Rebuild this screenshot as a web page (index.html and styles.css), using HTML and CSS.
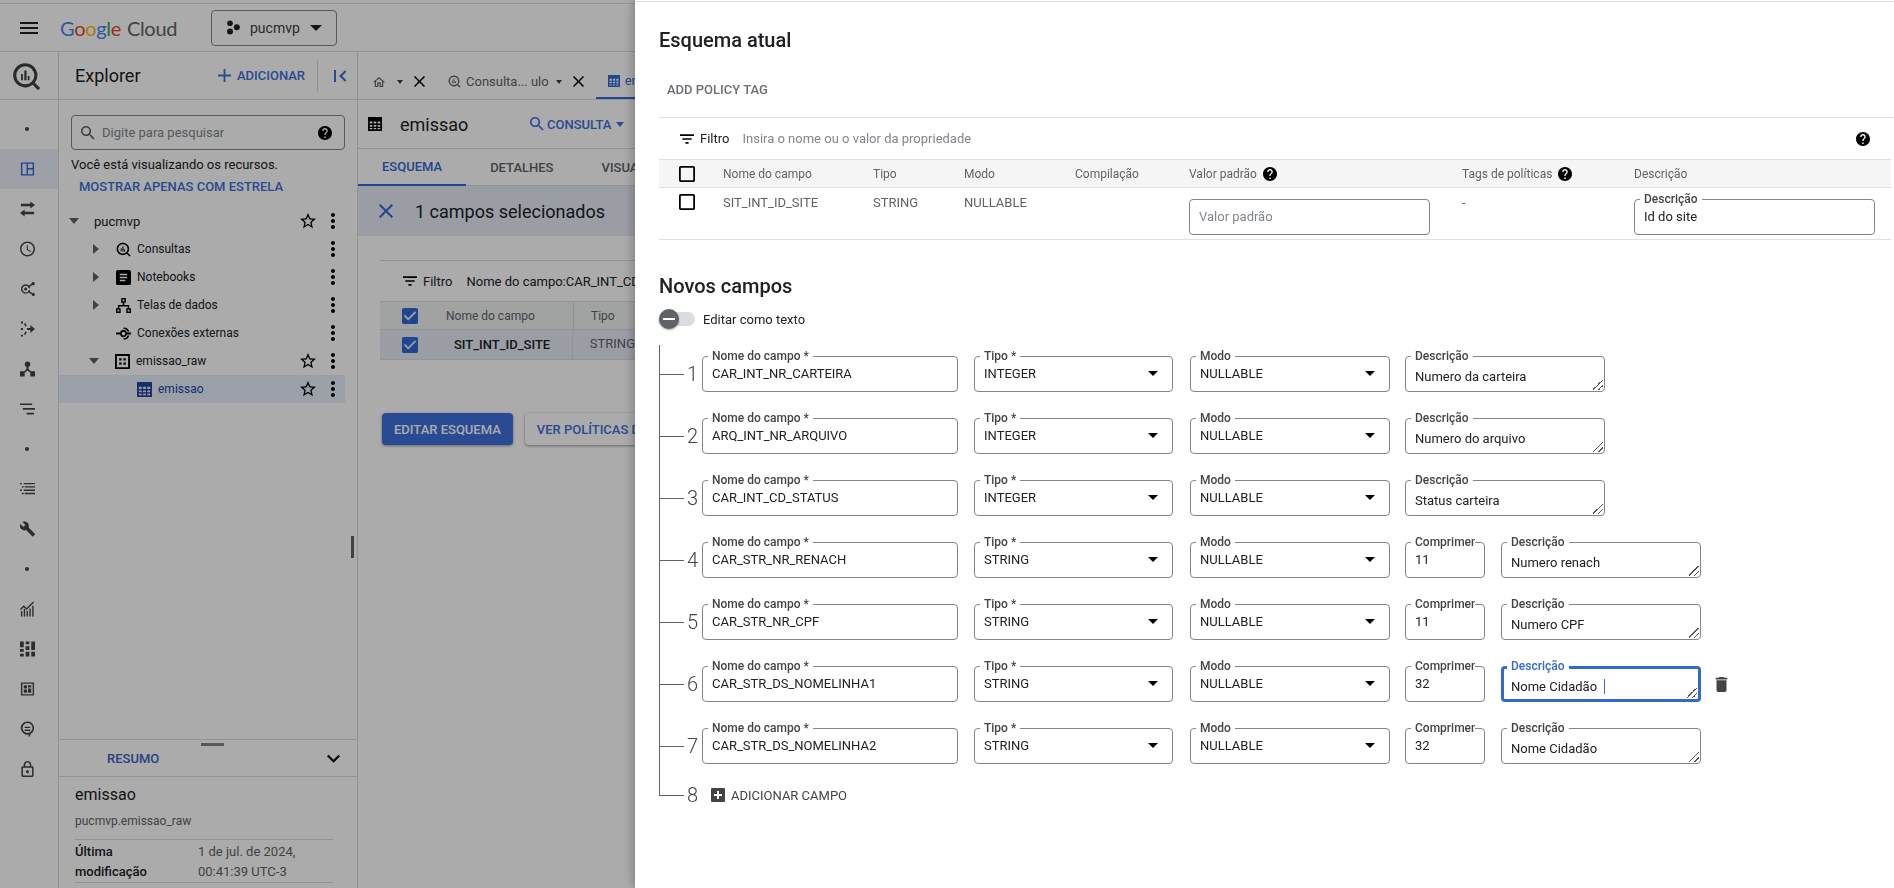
FILE: index.html
```html
<!DOCTYPE html>
<html lang="pt">
<head>
    <meta charset="UTF-8">
    <title>BigQuery - pucmvp</title>
    <link rel="stylesheet" href="styles.css">
</head>
<body>
    <!-- icon sprite -->
    <svg class="sprite" xmlns="http://www.w3.org/2000/svg">
        <symbol id="i-menu" viewBox="0 0 24 24"><path d="M3 18h18v-2H3v2zm0-5h18v-2H3v2zm0-7v2h18V6H3z"/></symbol>
        <symbol id="i-help" viewBox="2 2 20 20"><path d="M12 2C6.48 2 2 6.48 2 12s4.48 10 10 10 10-4.48 10-10S17.52 2 12 2zm1 17h-2v-2h2v2zm2.07-7.75l-.9.92C13.45 12.9 13 13.5 13 15h-2v-.5c0-1.1.45-2.1 1.17-2.83l1.24-1.26c.37-.36.59-.86.59-1.41 0-1.1-.9-2-2-2s-2 .9-2 2H8c0-2.21 1.79-4 4-4s4 1.79 4 4c0 .88-.36 1.68-.93 2.25z"/></symbol>
        <symbol id="i-search" viewBox="3 3 18 18"><path d="M15.5 14h-.79l-.28-.27C15.41 12.59 16 11.11 16 9.5 16 5.91 13.09 3 9.5 3S3 5.91 3 9.5 5.91 16 9.5 16c1.61 0 3.09-.59 4.23-1.57l.27.28v.79l5 4.99L20.49 19l-4.99-5zm-6 0C7.01 14 5 11.99 5 9.5S7.01 5 9.5 5 14 7.01 14 9.5 11.99 14 9.5 14z"/></symbol>
        <symbol id="i-star" viewBox="2 2 20 20"><path d="M22 9.24l-7.19-.62L12 2 9.19 8.63 2 9.24l5.46 4.73L5.82 21 12 17.27 18.18 21l-1.63-7.03L22 9.24zM12 15.4l-3.76 2.27 1-4.28-3.32-2.88 4.38-.38L12 6.1l1.71 4.04 4.38.38-3.32 2.88 1 4.28L12 15.4z"/></symbol>
        <symbol id="i-more" viewBox="0 0 24 24"><path d="M12 8c1.1 0 2-.9 2-2s-.9-2-2-2-2 .9-2 2 .9 2 2 2zm0 2c-1.1 0-2 .9-2 2s.9 2 2 2 2-.9 2-2-.9-2-2-2zm0 6c-1.1 0-2 .9-2 2s.9 2 2 2 2-.9 2-2-.9-2-2-2z"/></symbol>
        <symbol id="i-close" viewBox="5 5 14 14"><path d="M19 6.41L17.59 5 12 10.59 6.41 5 5 6.41 10.59 12 5 17.59 6.41 19 12 13.41 17.59 19 19 17.59 13.41 12z"/></symbol>
        <symbol id="i-add" viewBox="5 5 14 14"><path d="M19 13h-6v6h-2v-6H5v-2h6V5h2v6h6v2z"/></symbol>
        <symbol id="i-filter" viewBox="3 6 18 12"><path d="M10 18h4v-2h-4v2zM3 6v2h18V6H3zm3 7h12v-2H6v2z"/></symbol>
        <symbol id="i-box" viewBox="3 3 18 18"><path d="M19 5v14H5V5h14m0-2H5c-1.1 0-2 .9-2 2v14c0 1.1.9 2 2 2h14c1.1 0 2-.9 2-2V5c0-1.1-.9-2-2-2z"/></symbol>
        <symbol id="i-checked" viewBox="3 3 18 18"><path d="M19 3H5c-1.11 0-2 .9-2 2v14c0 1.1.89 2 2 2h14c1.11 0 2-.9 2-2V5c0-1.1-.89-2-2-2zm-9 14l-5-5 1.41-1.41L10 14.17l7.59-7.59L19 8l-9 9z"/></symbol>
        <symbol id="i-delete" viewBox="5 3 14 18"><path d="M6 19c0 1.1.9 2 2 2h8c1.1 0 2-.9 2-2V7H6v12zM19 4h-3.5l-1-1h-5l-1 1H5v2h14V4z"/></symbol>
        <symbol id="i-chevron" viewBox="6 8 12 8"><path d="M16.59 8.59L12 13.17 7.41 8.59 6 10l6 6 6-6z"/></symbol>
        <symbol id="i-home" viewBox="2 3 20 17"><path d="M12 5.69l5 4.5V18h-2v-6H9v6H7v-7.81l5-4.5M12 3L2 12h3v8h6v-6h2v6h6v-8h3L12 3z"/></symbol>
        <symbol id="i-clock" viewBox="2 2 20 20"><path d="M11.99 2C6.47 2 2 6.48 2 12s4.47 10 9.99 10C17.52 22 22 17.52 22 12S17.52 2 11.99 2zM12 20c-4.42 0-8-3.58-8-8s3.58-8 8-8 8 3.58 8 8-3.58 8-8 8zm.5-13H11v6l5.25 3.15.75-1.23-4.5-2.67z"/></symbol>
        <symbol id="i-swap" viewBox="0 0 16 16"><path d="M1 2.500h10V0l5 3.700-5 3.700V5H1zM15 11H5V8.600L0 12.300 5 16v-2.500h10z"/></symbol>
        <symbol id="i-wrench" viewBox="1 1 22 22"><path d="M22.7 19l-9.1-9.1c.9-2.3.4-5-1.5-6.9-2-2-5-2.4-7.4-1.3L9 6 6 9 1.6 4.700C.4 7.100.9 10.100 2.900 12.100c1.900 1.900 4.600 2.400 6.900 1.500l9.100 9.100c.4.400 1 .4 1.400 0l2.300-2.300c.5-.4.5-1.100.1-1.400z"/></symbol>
        <symbol id="i-lock" viewBox="4 1 16 21"><path d="M18 8h-1V6c0-2.76-2.24-5-5-5S7 3.24 7 6v2H6c-1.1 0-2 .9-2 2v10c0 1.1.9 2 2 2h12c1.1 0 2-.9 2-2V10c0-1.1-.9-2-2-2zM9 6c0-1.66 1.34-3 3-3s3 1.34 3 3v2H9V6zm9 14H6V10h12v10zm-6-3c1.1 0 2-.9 2-2s-.9-2-2-2-2 .9-2 2 .9 2 2 2z"/></symbol>
        <symbol id="i-table" viewBox="0 0 16 16"><path fill-rule="evenodd" d="M0 0h16v16H0zM2 5v2.500h3V5zm4.500 0v2.500h3V5zM11 5v2.500h3V5zM2 9v2h3V9zm4.500 0v2h3V9zM11 9v2h3V9zM2 12.500V14h3v-1.500zm4.500 0V14h3v-1.500zm4.500 0V14h3v-1.500z"/></symbol>
        <symbol id="i-dataset" viewBox="0 0 16 16"><path fill-rule="evenodd" d="M0 0h16v16H0zM2 2v12h12V2zM4.500 4.500h2.500V7H4.500zm4.500 0h2.500V7H9zM4.500 9h2.500v2.500H4.500zM9 9h2.500v2.500H9z"/></symbol>
        <symbol id="i-note" viewBox="0 0 16 16"><path fill-rule="evenodd" d="M2 0h12a2 2 0 0 1 2 2v12a2 2 0 0 1-2 2H2a2 2 0 0 1-2-2V2a2 2 0 0 1 2-2zM4 4v1.500h8V4zm0 3.200v1.500h8V7.200zm0 3.200v1.500h6v-1.500z"/></symbol>
        <symbol id="i-nodes" viewBox="0 0 16 16"><path fill-rule="evenodd" d="M5.500 0h5v5H8.800v2.500H14V11h2v5h-5v-5h1.500V9H3.500v2H5v5H0v-5h2V7.500h5.200V5H5.500zM7 1.500v2h2v-2zM1.500 12.500v2h2v-2zm11 0v2h2v-2z"/></symbol>
        <symbol id="i-link" viewBox="0 0 16 16"><path fill-rule="evenodd" d="M0 7h4.500a3.500 3.500 0 0 1 6.900 0H16v2h-4.600a3.500 3.500 0 0 1-6.900 0H0zM8 6a2 2 0 1 0 0 4 2 2 0 0 0 0-4zM8 1.500a6.500 6.500 0 0 1 6.300 4.500h-1.700A5 5 0 0 0 8 3zM8 14.500a6.500 6.500 0 0 0 6.300-4.500h-1.700A5 5 0 0 1 8 13z"/></symbol>
        <symbol id="i-query" viewBox="0 0 24 24"><path fill-rule="evenodd" d="M11 1a10 10 0 0 1 7.900 16.100l4.400 4.400-1.800 1.800-4.400-4.400A10 10 0 1 1 11 1zm0 2.500a7.500 7.500 0 1 0 0 15 7.500 7.500 0 0 0 0-15zM7.500 10H9v5H7.500zM10.200 7H12v8h-1.800zM13 11.500h1.500V15H13z"/></symbol>
        <symbol id="i-panel" viewBox="0 0 16 16"><path fill-rule="evenodd" d="M1 1h14v14H1zM2.500 2.500v11H7v-11zm6 0V7h5V2.500zm0 6v5h5v-5z"/></symbol>
        <symbol id="i-scan" viewBox="0 0 16 16"><path fill-rule="evenodd" d="M6 3a5 5 0 0 1 3.300 1.300L12.300 2.400a1.700 1.700 0 1 1 .9 1.400L10.300 5.600a5 5 0 0 1 .6 1.600H9.400A3.500 3.500 0 1 0 9.400 9h1.500a5 5 0 0 1-.6 1.500l3 1.900a1.700 1.700 0 1 1-.8 1.400L9.300 11.800A5 5 0 1 1 6 3zm0 3.500a1.600 1.600 0 1 1 0 3.200 1.600 1.600 0 0 1 0-3.200z"/></symbol>
        <symbol id="i-merge" viewBox="0 0 16 16"><path d="M1 0h2.200v2H1zm3.200 2.500l1.500-1 1.600 3-1.700.8zM1 7h2.200v2H1zm4.600 3.700l1.700.8-1.600 3-1.500-1zM1 14h2.200v2H1zM7.500 7H11V3.800L16 8l-5 4.200V9H7.500z"/></symbol>
        <symbol id="i-tree" viewBox="0 0 16 16"><path d="M8 0a3 3 0 0 1 1.100 5.800V8l2.400 2.500H16V16h-5v-3.900L8 9.500l-3 2.600V16H0v-5.500h4.500L6.900 8V5.800A3 3 0 0 1 8 0z"/></symbol>
        <symbol id="i-lines" viewBox="0 0 16 16"><path d="M0 2h13v1.800H0zM3 7h13v1.800H3zM7 12h8v1.800H7z"/></symbol>
        <symbol id="i-list" viewBox="0 0 16 16"><path d="M0 1.500h2V3H0zm4 0h12V3H4zM2 5h2v1.500H2zm3 0h11v1.500H5zM0 8.500h2V10H0zm4 0h12V10H4zM2 12h2v1.500H2zm3 0h11v1.500H5z"/></symbol>
        <symbol id="i-chart" viewBox="0 0 16 16"><path d="M1 10h1.500v6H1zm3-2h1.500v8H4zm3 2h1.500v6H7zm3-2.500h1.500V16H10zm3-3h1.500V16H13zM0 8l4-4 3 3 7-7 1 1-8 8-3-3-3 3z"/></symbol>
        <symbol id="i-dash" viewBox="0 0 16 16"><path d="M0 0h4v6H0zm6 0h4v3H6zm6 0h4v9h-4zM6 5h4v4H6zM0 8h4v3H0zm0 5h4v3H0zm6-2h4v5H6zm6 0h4v5h-4z"/></symbol>
        <symbol id="i-layout" viewBox="0 0 16 16"><path fill-rule="evenodd" d="M1 1h14v14H1zM2.500 2.500v11h11v-11zM4 4h3.500v3.500H4zm4.500 0H12v2.500H8.500zm0 3.500H12V12H8.500zM4 8.500h3.500V12H4z"/></symbol>
        <symbol id="i-chat" viewBox="0 0 16 16"><path fill-rule="evenodd" d="M8 0a7 7 0 0 1 3.500 13l-1 3H9l.5-2.200A7 7 0 1 1 8 0zm0 1.700a5.300 5.300 0 1 0 0 10.600 5.300 5.300 0 0 0 0-10.600zM5 5.500h6V7H5zm0 3h6V10H5z"/></symbol>
        <symbol id="i-project" viewBox="0 0 14 14"><circle cx="4" cy="2.800" r="2.800"/><circle cx="10.800" cy="6.800" r="3"/><circle cx="4" cy="11" r="3"/></symbol>
    </svg>

    <div class="app">
        <div class="top-strip"></div>
        <header class="topbar">
            <svg class="ico menu-ico"><use href="#i-menu"/></svg>
            <div class="logo"><span class="g-blue">G</span><span class="g-red">o</span><span class="g-yellow">o</span><span class="g-blue">g</span><span class="g-green">l</span><span class="g-red">e</span> <span class="g-cloud">Cloud</span></div>
            <div class="project-btn">
                <svg class="ico project-ico"><use href="#i-project"/></svg>
                <span>pucmvp</span>
                <i class="caret caret-big"></i>
            </div>
        </header>

        <div class="workspace">
            <!-- left icon rail -->
            <nav class="rail">
                <div class="rail-logo"><svg class="ico"><use href="#i-query"/></svg></div>
                <div class="rail-list">
                    <div class="rail-item"><i class="dot"></i></div>
                    <div class="rail-item active"><svg class="ico blue"><use href="#i-panel"/></svg></div>
                    <div class="rail-item"><svg class="ico"><use href="#i-swap"/></svg></div>
                    <div class="rail-item"><svg class="ico"><use href="#i-clock"/></svg></div>
                    <div class="rail-item"><svg class="ico"><use href="#i-scan"/></svg></div>
                    <div class="rail-item"><svg class="ico"><use href="#i-merge"/></svg></div>
                    <div class="rail-item"><svg class="ico"><use href="#i-tree"/></svg></div>
                    <div class="rail-item"><svg class="ico"><use href="#i-lines"/></svg></div>
                    <div class="rail-item"><i class="dot"></i></div>
                    <div class="rail-item"><svg class="ico"><use href="#i-list"/></svg></div>
                    <div class="rail-item"><svg class="ico"><use href="#i-wrench"/></svg></div>
                    <div class="rail-item"><i class="dot"></i></div>
                    <div class="rail-item"><svg class="ico"><use href="#i-chart"/></svg></div>
                    <div class="rail-item"><svg class="ico"><use href="#i-dash"/></svg></div>
                    <div class="rail-item"><svg class="ico"><use href="#i-layout"/></svg></div>
                    <div class="rail-item"><svg class="ico"><use href="#i-chat"/></svg></div>
                    <div class="rail-item"><svg class="ico"><use href="#i-lock"/></svg></div>
                </div>
            </nav>

            <!-- explorer -->
            <aside class="explorer">
                <div class="explorer-head">
                    <h2>Explorer</h2>
                    <span class="add-link"><svg class="ico"><use href="#i-add"/></svg>ADICIONAR</span>
                    <span class="collapse-btn"><b></b><i></i></span>
                </div>
                <div class="search-box">
                    <svg class="ico"><use href="#i-search"/></svg>
                    <span>Digite para pesquisar</span>
                    <svg class="ico help"><use href="#i-help"/></svg>
                </div>
                <p class="res-note">Você está visualizando os recursos.</p>
                <p class="star-link">MOSTRAR APENAS COM ESTRELA</p>
                <div class="res-tree">
                    <div class="res-row lvl0"><i class="caret tree-caret"></i><span>pucmvp</span><svg class="ico star"><use href="#i-star"/></svg><svg class="ico kebab"><use href="#i-more"/></svg></div>
                    <div class="res-row lvl1"><i class="caret-right"></i><svg class="ico res-ico"><use href="#i-query"/></svg><span>Consultas</span><svg class="ico kebab"><use href="#i-more"/></svg></div>
                    <div class="res-row lvl1"><i class="caret-right"></i><svg class="ico res-ico"><use href="#i-note"/></svg><span>Notebooks</span><svg class="ico kebab"><use href="#i-more"/></svg></div>
                    <div class="res-row lvl1"><i class="caret-right"></i><svg class="ico res-ico"><use href="#i-nodes"/></svg><span>Telas de dados</span><svg class="ico kebab"><use href="#i-more"/></svg></div>
                    <div class="res-row lvl1"><i class="caret-none"></i><svg class="ico res-ico"><use href="#i-link"/></svg><span>Conexões externas</span><svg class="ico kebab"><use href="#i-more"/></svg></div>
                    <div class="res-row lvl1"><i class="caret tree-caret"></i><svg class="ico res-ico"><use href="#i-dataset"/></svg><span>emissao_raw</span><svg class="ico star"><use href="#i-star"/></svg><svg class="ico kebab"><use href="#i-more"/></svg></div>
                    <div class="res-row lvl2 selected"><svg class="ico res-ico"><use href="#i-table"/></svg><span>emissao</span><svg class="ico star"><use href="#i-star"/></svg><svg class="ico kebab"><use href="#i-more"/></svg></div>
                </div>
                <div class="summary">
                    <i class="handle"></i>
                    <div class="summary-head"><span>RESUMO</span><svg class="ico"><use href="#i-chevron"/></svg></div>
                    <div class="summary-body">
                        <h3>emissao</h3>
                        <p class="summary-path">pucmvp.emissao_raw</p>
                        <div class="summary-row">
                            <div class="summary-key">Última<br>modificação</div>
                            <div class="summary-val">1 de jul. de 2024,<br>00:41:39 UTC-3</div>
                        </div>
                    </div>
                </div>
            </aside>

            <i class="splitter"></i>

            <!-- main content behind the panel -->
            <main class="main">
                <div class="main-tabs">
                    <svg class="ico tab-home"><use href="#i-home"/></svg><i class="caret"></i><svg class="ico tab-x"><use href="#i-close"/></svg>
                    <svg class="ico tab-query"><use href="#i-query"/></svg><span class="tab-text">Consulta... ulo</span><i class="caret"></i><svg class="ico tab-x"><use href="#i-close"/></svg>
                    <span class="tab-open"><svg class="ico"><use href="#i-table"/></svg>em</span>
                </div>
                <div class="title-row">
                    <svg class="ico title-ico"><use href="#i-table"/></svg>
                    <h1>emissao</h1>
                    <span class="query-btn"><svg class="ico"><use href="#i-search"/></svg>CONSULTA<i class="caret"></i></span>
                </div>
                <div class="sub-tabs">
                    <span class="sub-tab current">ESQUEMA</span>
                    <span class="sub-tab">DETALHES</span>
                    <span class="sub-tab">VISUA</span>
                </div>
                <div class="selected-bar">
                    <svg class="ico"><use href="#i-close"/></svg>
                    <span>1 campos selecionados</span>
                </div>
                <div class="schema-wrap">
                    <div class="main-filter">
                        <svg class="ico"><use href="#i-filter"/></svg><b>Filtro</b><span>Nome do campo:CAR_INT_CD</span>
                    </div>
                    <div class="main-row head">
                        <svg class="ico check"><use href="#i-checked"/></svg><span class="col-name">Nome do campo</span><span class="col-type">Tipo</span>
                    </div>
                    <div class="main-row picked">
                        <svg class="ico check"><use href="#i-checked"/></svg><strong class="col-name">SIT_INT_ID_SITE</strong><span class="col-type">STRING</span>
                    </div>
                    <div class="main-actions">
                        <span class="btn-primary">EDITAR ESQUEMA</span>
                        <span class="btn-plain">VER POLÍTICAS D</span>
                    </div>
                </div>
            </main>
        </div>
    </div>

    <div class="scrim"></div>

    <!-- side panel -->
    <section class="panel">
        <h2 class="panel-title">Esquema atual</h2>
        <div class="policy-bar"><span>ADD POLICY TAG</span></div>
        <div class="panel-filter">
            <svg class="ico"><use href="#i-filter"/></svg><b>Filtro</b>
            <span>Insira o nome ou o valor da propriedade</span>
            <svg class="ico help"><use href="#i-help"/></svg>
        </div>
        <div class="cur-grid cur-head">
            <span class="cur-check"><svg class="ico"><use href="#i-box"/></svg></span>
            <span>Nome do campo</span><span>Tipo</span><span>Modo</span><span>Compilação</span>
            <span class="with-help">Valor padrão <svg class="ico help"><use href="#i-help"/></svg></span>
            <span class="with-help">Tags de políticas <svg class="ico help"><use href="#i-help"/></svg></span>
            <span>Descrição</span>
        </div>
        <div class="cur-grid cur-row">
            <span class="cur-check"><svg class="ico"><use href="#i-box"/></svg></span>
            <span>SIT_INT_ID_SITE</span><span>STRING</span><span>NULLABLE</span><span></span>
            <div class="box cur-input"><div class="box-text muted">Valor padrão</div></div>
            <span>-</span>
            <div class="box cur-input"><label>Descrição</label><div class="box-text">Id do site</div></div>
        </div>

        <h2 class="panel-title novos">Novos campos</h2>
        <div class="toggle-row">
            <span class="toggle"><i></i></span>
            <span>Editar como texto</span>
        </div>

        <div class="fields">
            <div class="field-row">
                <i class="conn"></i><span class="num">1</span>
                <div class="box f-name"><label>Nome do campo *</label><div class="box-text">CAR_INT_NR_CARTEIRA</div></div>
                <div class="box f-type"><label>Tipo *</label><div class="box-text">INTEGER</div><i class="caret select-caret"></i></div>
                <div class="box f-mode"><label>Modo</label><div class="box-text">NULLABLE</div><i class="caret select-caret"></i></div>
                <div class="box f-desc"><label>Descrição</label><div class="box-text area">Numero da carteira</div><i class="grip"></i></div>
            </div>
            <div class="field-row">
                <i class="conn"></i><span class="num">2</span>
                <div class="box f-name"><label>Nome do campo *</label><div class="box-text">ARQ_INT_NR_ARQUIVO</div></div>
                <div class="box f-type"><label>Tipo *</label><div class="box-text">INTEGER</div><i class="caret select-caret"></i></div>
                <div class="box f-mode"><label>Modo</label><div class="box-text">NULLABLE</div><i class="caret select-caret"></i></div>
                <div class="box f-desc"><label>Descrição</label><div class="box-text area">Numero do arquivo</div><i class="grip"></i></div>
            </div>
            <div class="field-row">
                <i class="conn"></i><span class="num">3</span>
                <div class="box f-name"><label>Nome do campo *</label><div class="box-text">CAR_INT_CD_STATUS</div></div>
                <div class="box f-type"><label>Tipo *</label><div class="box-text">INTEGER</div><i class="caret select-caret"></i></div>
                <div class="box f-mode"><label>Modo</label><div class="box-text">NULLABLE</div><i class="caret select-caret"></i></div>
                <div class="box f-desc"><label>Descrição</label><div class="box-text area">Status carteira</div><i class="grip"></i></div>
            </div>
            <div class="field-row">
                <i class="conn"></i><span class="num">4</span>
                <div class="box f-name"><label>Nome do campo *</label><div class="box-text">CAR_STR_NR_RENACH</div></div>
                <div class="box f-type"><label>Tipo *</label><div class="box-text">STRING</div><i class="caret select-caret"></i></div>
                <div class="box f-mode"><label>Modo</label><div class="box-text">NULLABLE</div><i class="caret select-caret"></i></div>
                <div class="box f-len"><label>Comprimento</label><div class="box-text">11</div></div>
                <div class="box f-desc"><label>Descrição</label><div class="box-text area">Numero renach</div><i class="grip"></i></div>
            </div>
            <div class="field-row">
                <i class="conn"></i><span class="num">5</span>
                <div class="box f-name"><label>Nome do campo *</label><div class="box-text">CAR_STR_NR_CPF</div></div>
                <div class="box f-type"><label>Tipo *</label><div class="box-text">STRING</div><i class="caret select-caret"></i></div>
                <div class="box f-mode"><label>Modo</label><div class="box-text">NULLABLE</div><i class="caret select-caret"></i></div>
                <div class="box f-len"><label>Comprimento</label><div class="box-text">11</div></div>
                <div class="box f-desc"><label>Descrição</label><div class="box-text area">Numero CPF</div><i class="grip"></i></div>
            </div>
            <div class="field-row">
                <i class="conn"></i><span class="num">6</span>
                <div class="box f-name"><label>Nome do campo *</label><div class="box-text">CAR_STR_DS_NOMELINHA1</div></div>
                <div class="box f-type"><label>Tipo *</label><div class="box-text">STRING</div><i class="caret select-caret"></i></div>
                <div class="box f-mode"><label>Modo</label><div class="box-text">NULLABLE</div><i class="caret select-caret"></i></div>
                <div class="box f-len"><label>Comprimento</label><div class="box-text">32</div></div>
                <div class="box f-desc focused"><label>Descrição</label><div class="box-text area">Nome Cidadão<i class="text-cursor"></i></div><i class="grip"></i></div>
                <svg class="ico trash"><use href="#i-delete"/></svg>
            </div>
            <div class="field-row">
                <i class="conn"></i><span class="num">7</span>
                <div class="box f-name"><label>Nome do campo *</label><div class="box-text">CAR_STR_DS_NOMELINHA2</div></div>
                <div class="box f-type"><label>Tipo *</label><div class="box-text">STRING</div><i class="caret select-caret"></i></div>
                <div class="box f-mode"><label>Modo</label><div class="box-text">NULLABLE</div><i class="caret select-caret"></i></div>
                <div class="box f-len"><label>Comprimento</label><div class="box-text">32</div></div>
                <div class="box f-desc"><label>Descrição</label><div class="box-text area">Nome Cidadão</div><i class="grip"></i></div>
            </div>
            <div class="field-row add-row">
                <i class="conn"></i><span class="num">8</span>
                <span class="add-icon"></span><span class="add-text">ADICIONAR CAMPO</span>
            </div>
        </div>
    </section>
</body>
</html>
```

FILE: styles.css
```css
* {
    margin: 0;
    padding: 0;
    box-sizing: border-box;
}

html, body {
    height: 100%;
    overflow: hidden;
}

body {
    font-family: Roboto, "Liberation Sans", sans-serif;
    font-size: 13px;
    color: #202124;
    background: #fff;
}

.sprite {
    position: absolute;
    width: 0;
    height: 0;
}

.ico {
    display: block;
    width: 16px;
    height: 16px;
    fill: #000;
    flex: none;
}

.help {
    width: 14px;
    height: 14px;
}

.caret {
    display: block;
    flex: none;
    width: 0;
    height: 0;
    border-left: 4px solid transparent;
    border-right: 4px solid transparent;
    border-top: 5px solid #000;
}

/* page behind the scrim, it stops where the panel starts */
.app {
    display: flex;
    flex-direction: column;
    width: 635px;
    height: 888px;
    overflow: hidden;
}

.top-strip {
    height: 4px;
    flex: none;
    border-bottom: 1px solid #dadce0;
}

.topbar {
    display: flex;
    align-items: center;
    height: 48px;
    flex: none;
    border-bottom: 1px solid #dadce0;
    padding-left: 17px;
}

.menu-ico {
    width: 24px;
    height: 24px;
    fill: #3c4043;
}

.logo {
    margin-left: 19px;
    width: 116px;
    font-family: Lato, sans-serif;
    font-size: 20px;
    letter-spacing: -.3px;
    white-space: nowrap;
}

.g-blue { color: #4285f4; }
.g-red { color: #ea4335; }
.g-yellow { color: #fbbc04; }
.g-green { color: #34a853; }
.g-cloud { color: #5f6368; margin-left: 1px; }

.project-btn {
    display: flex;
    align-items: center;
    margin-left: 35px;
    width: 126px;
    height: 36px;
    padding-left: 14px;
    border: 1px solid #80868b;
    border-radius: 4px;
    font-size: 14px;
    color: #3c4043;
}

.project-ico {
    width: 14px;
    height: 15px;
    margin-right: 10px;
}

.project-ico, .menu-ico { fill: #202124; }

.caret-big {
    margin-left: 10px;
    border-left-width: 6px;
    border-right-width: 6px;
    border-top-width: 6px;
    border-top-color: #202124;
}

.workspace {
    flex: 1;
    display: flex;
    min-height: 0;
    position: relative;
}

/* icon rail */
.rail {
    width: 59px;
    border-right: 1px solid #dadce0;
    flex: none;
}

.rail-logo {
    height: 48px;
    border-bottom: 1px solid #dadce0;
    padding: 10px 0 0 12px;
}

.rail-logo .ico {
    width: 29px;
    height: 29px;
    fill: #3c4043;
}

.rail-list {
    padding-top: 9px;
}

.rail-item {
    display: flex;
    align-items: center;
    padding-left: 20px;
    height: 40px;
}

.rail-item .ico {
    width: 15px;
    height: 16px;
    fill: #444;
}

.rail-item.active {
    background: #eaeff8;
}

.rail-item .blue {
    fill: #3367d6;
}

.dot {
    display: block;
    width: 4px;
    height: 4px;
    margin-left: 5px;
    border-radius: 50%;
    background: #444;
}

/* explorer */
.explorer {
    width: 299px;
    flex: none;
    border-right: 1px solid #dadce0;
    display: flex;
    flex-direction: column;
}

.explorer-head {
    display: flex;
    align-items: center;
    height: 48px;
    border-bottom: 1px solid #dadce0;
    padding-left: 16px;
}

.explorer-head h2 {
    font-size: 18px;
    font-weight: 400;
    width: 143px;
}

.add-link {
    display: flex;
    align-items: center;
    gap: 6px;
    font-size: 13px;
    font-weight: 500;
    color: #3d6fd9;
}

.add-link .ico {
    width: 13px;
    height: 13px;
    fill: #3d6fd9;
}

.collapse-btn {
    display: flex;
    align-items: center;
    margin-left: 12px;
    height: 32px;
    padding-left: 16px;
    border-left: 1px solid #dadce0;
}

.collapse-btn b {
    width: 2px;
    height: 12px;
    background: #3d6fd9;
}

.collapse-btn i {
    width: 8px;
    height: 8px;
    margin-left: 5px;
    border-left: 2px solid #3d6fd9;
    border-bottom: 2px solid #3d6fd9;
    transform: rotate(45deg);
}

.search-box {
    display: flex;
    align-items: center;
    margin: 15px 12px 0;
    width: 274px;
    height: 35px;
    padding: 0 12px 0 9px;
    border: 1px solid #80868b;
    border-radius: 4px;
    font-size: 13px;
    color: #80868b;
}

.search-box span {
    flex: 1;
    margin-left: 7px;
}

.search-box .ico:first-child {
    width: 14px;
    height: 14px;
    fill: #5f6368;
}

.res-note {
    margin: 7px 12px 0;
    height: 16px;
    line-height: 16px;
    font-size: 13px;
    white-space: nowrap;
}

.star-link {
    margin: 6px 0 0 20px;
    height: 16px;
    line-height: 16px;
    font-size: 13px;
    font-weight: 500;
    color: #3d6fd9;
    white-space: nowrap;
}

.res-tree {
    flex: 1;
    margin-top: 12px;
    width: 286px;
}

.res-row {
    display: flex;
    align-items: center;
    height: 28px;
    font-size: 12px;
    white-space: nowrap;
}

.res-row span {
    flex: 1;
}

.lvl0 { padding-left: 10px; font-size: 13px; }
.lvl1 { padding-left: 30px; }
.lvl2 { padding-left: 78px; }

.tree-caret {
    border-left-width: 5.500px;
    border-right-width: 5.500px;
    border-top-width: 6px;
    border-top-color: #5f6368;
}

.lvl0 .tree-caret { margin-right: 15px; }
.lvl1 .tree-caret { margin-right: 16px; }

.caret-right {
    display: block;
    flex: none;
    margin: 0 17px 0 4px;
    width: 0;
    height: 0;
    border-top: 5.500px solid transparent;
    border-bottom: 5.500px solid transparent;
    border-left: 6px solid #5f6368;
}

.caret-none {
    display: block;
    width: 27px;
    flex: none;
}

.res-ico {
    width: 15px;
    height: 15px;
    margin-right: 6px;
}

.star {
    width: 16px;
    height: 16px;
    margin-right: 5px;
}

.kebab {
    width: 24px;
    height: 24px;
}

.selected {
    background: #e8eef9;
    color: #2545a0;
}

.selected .res-ico {
    fill: #2545a0;
}

/* summary */
.summary {
    position: relative;
    height: 149px;
    flex: none;
    border-top: 1px solid #dadce0;
}

.handle {
    position: absolute;
    top: 3px;
    left: 142px;
    width: 23px;
    height: 3px;
    background: #80868b;
}

.summary-head {
    display: flex;
    align-items: center;
    justify-content: space-between;
    height: 37px;
    padding: 0 17px 0 48px;
    border-bottom: 1px solid #dadce0;
    font-weight: 500;
    color: #3d5fc4;
}

.summary-head .ico {
    width: 13px;
    height: 9px;
}

.summary-body {
    padding: 8px 24px 0 16px;
}

.summary-body h3 {
    font-size: 16px;
    line-height: 20px;
    font-weight: 400;
}

.summary-path {
    margin-top: 7px;
    padding-bottom: 9px;
    line-height: 18px;
    font-size: 12px;
    color: #5f6368;
    border-bottom: 1px solid #dadce0;
}

.summary-row {
    display: flex;
    line-height: 20px;
    padding-top: 2px;
    border-bottom: 1px solid #dadce0;
}

.summary-key {
    width: 123px;
    font-weight: 500;
}

.summary-val {
    color: #5f6368;
}

.splitter {
    position: absolute;
    left: 351px;
    top: 484px;
    width: 3px;
    height: 22px;
    background: #5f6368;
}

/* main */
.main {
    flex: 1;
    min-width: 0;
    overflow: hidden;
}

.main-tabs {
    display: flex;
    align-items: center;
    height: 48px;
    border-bottom: 1px solid #dadce0;
    padding: 12px 0 0 15px;
    white-space: nowrap;
}

.main-tabs .caret {
    border-left-width: 3.500px;
    border-right-width: 3.500px;
    border-top-width: 4px;
    border-top-color: #3c4043;
}

.tab-home {
    width: 12px;
    height: 12px;
    margin-right: 12px;
    fill: #5f6368;
}

.tab-x {
    width: 11px;
    height: 11px;
    margin-left: 11px;
    margin-right: 23px;
}

.tab-query {
    width: 13px;
    height: 13px;
    margin-right: 5px;
    fill: #5f6368;
}

.tab-text {
    font-size: 13px;
    color: #5f6368;
    margin-right: 7px;
}

.tab-open {
    flex: 1;
    display: flex;
    align-items: center;
    align-self: flex-end;
    gap: 5px;
    margin-left: -11px;
    height: 35px;
    padding-left: 12px;
    border-bottom: 2px solid #3367d6;
    color: #3367d6;
}

.tab-open .ico {
    width: 12px;
    height: 12px;
    fill: #3367d6;
}

.title-row {
    display: flex;
    align-items: center;
    height: 49px;
    border-bottom: 1px solid #dadce0;
    padding-left: 10px;
    white-space: nowrap;
}

.title-ico {
    width: 14px;
    height: 14px;
}

.title-row h1 {
    margin-left: 18px;
    width: 130px;
    font-size: 18px;
    font-weight: 400;
}

.query-btn {
    display: flex;
    align-items: center;
    font-weight: 500;
    font-size: 13px;
    color: #3d6fd9;
}

.query-btn .ico {
    width: 14px;
    height: 14px;
    margin-right: 3px;
    fill: #3d6fd9;
}

.query-btn .caret {
    margin-left: 5px;
    border-top-color: #3d6fd9;
}

.sub-tabs {
    display: flex;
    height: 37px;
    border-bottom: 1px solid #dadce0;
    white-space: nowrap;
}

.sub-tab {
    display: flex;
    align-items: center;
    padding: 0 24px;
    height: 37px;
    font-weight: 500;
    color: #5f6368;
}

.sub-tab.current {
    color: #3367d6;
    border-bottom: 2px solid #3367d6;
}

.selected-bar {
    display: flex;
    align-items: center;
    height: 50px;
    padding-left: 21px;
    background: #e8eaf6;
    font-size: 18px;
    white-space: nowrap;
}

.selected-bar .ico {
    width: 14px;
    height: 14px;
    margin-right: 22px;
    fill: #3367d6;
}

.schema-wrap {
    margin: 24px 0 0 22px;
    white-space: nowrap;
}

.main-filter {
    display: flex;
    align-items: center;
    height: 41px;
    padding-left: 23px;
    border-top: 1px solid #dadce0;
}

.main-filter .ico {
    width: 14px;
    height: 10px;
}

.main-filter b {
    font-weight: 400;
    margin: 0 14px 0 6px;
}

.main-row {
    display: flex;
    align-items: center;
    height: 30px;
    border-bottom: 1px solid #dadce0;
    padding-left: 22px;
}

.main-row.head {
    height: 29px;
    background: #f1f3f4;
    color: #5f6368;
    font-size: 12px;
    border-top: 1px solid #dadce0;
}

.main-row.picked {
    background: #e8eaf6;
}

.check {
    width: 16px;
    height: 16px;
    fill: #3367d6;
}

.col-name {
    width: 127px;
    margin-left: 28px;
}

.picked .col-name { padding-left: 8px; font-weight: 500; }

.col-type {
    height: 100%;
    line-height: 28px;
    padding-left: 17px;
    border-left: 1px solid #dadce0;
    color: #5f6368;
}

.main-actions {
    display: flex;
    gap: 12px;
    margin: 53px 0 0 2px;
}

.btn-primary, .btn-plain {
    display: flex;
    align-items: center;
    flex: none;
    height: 32px;
    padding: 0 12px;
    border-radius: 4px;
    font-weight: 500;
    font-size: 13px;
    box-shadow: 0 1px 3px rgba(0, 0, 0, .4);
}

.btn-primary {
    background: #3e70dc;
    color: #fff;
}

.btn-plain {
    width: 160px;
    background: #fff;
    color: #3e70dc;
}

.scrim {
    position: fixed;
    top: 0;
    left: 0;
    right: 0;
    bottom: 0;
    background: rgba(0, 0, 0, .33);
}

/* side panel */
.panel {
    position: fixed;
    top: 0;
    bottom: 0;
    left: 635px;
    right: 0;
    background: #fff;
    box-shadow: 0 0 12px rgba(0, 0, 0, .35);
    padding: 29px 0 0 24px;
}

.panel::before {
    content: "";
    position: absolute;
    top: 1px;
    left: 0;
    right: 0;
    height: 1px;
    background: #e0e0e0;
}

.panel-title {
    font-size: 20px;
    line-height: 22px;
    font-weight: 500;
    color: #202124;
}

.policy-bar {
    display: flex;
    align-items: center;
    height: 67px;
    padding: 11px 0 0 8px;
    border-bottom: 1px solid #e0e0e0;
    font-weight: 500;
    color: #6b6f73;
}

.panel-filter {
    display: flex;
    align-items: center;
    height: 41px;
    padding-left: 21px;
    padding-right: 24px;
}

.panel-filter > .ico:first-child {
    width: 14px;
    height: 10px;
}

.panel-filter b {
    font-weight: 400;
    margin: 0 13px 0 6px;
}

.panel-filter span {
    flex: 1;
    color: #80868b;
}

.cur-grid {
    display: grid;
    grid-template-columns: 64px 150px 91px 111px 114px 273px 172px 241px;
    margin-right: 3px;
    border-bottom: 1px solid #e0e0e0;
    white-space: nowrap;
}

.cur-head {
    height: 29px;
    align-items: center;
    background: #f5f5f5;
    border-top: 1px solid #e0e0e0;
    font-size: 12px;
    color: #5f6368;
}

.cur-check {
    padding-left: 20px;
}

.cur-row {
    height: 52px;
    color: #5f6368;
    padding-top: 6px;
}

.cur-row > span {
    line-height: 18px;
}

.with-help {
    display: flex;
    align-items: center;
    gap: 6px;
}

.cur-input {
    width: 241px;
    margin-top: 5px;
}

.novos {
    margin-top: 35px;
}

.toggle-row {
    display: flex;
    align-items: center;
    height: 20px;
    margin-top: 12px;
    gap: 8px;
}

.toggle {
    position: relative;
    display: block;
    width: 36px;
    height: 14px;
    border-radius: 7px;
    background: #dadce0;
}

.toggle i {
    position: absolute;
    top: -3px;
    left: 0;
    width: 20px;
    height: 20px;
    border-radius: 50%;
    background: #5f6368;
    box-shadow: 0 1px 2px rgba(0, 0, 0, .4);
}

.toggle i::after {
    content: "";
    position: absolute;
    top: 9px;
    left: 4px;
    width: 12px;
    height: 2px;
    background: #fff;
}

/* new fields tree */
.fields {
    position: relative;
    margin-top: 16px;
    padding-top: 11px;
}

.fields::before {
    content: "";
    position: absolute;
    top: 0;
    bottom: 12px;
    left: 0;
    width: 1px;
    background: #5f6368;
}

.field-row {
    display: flex;
    align-items: center;
    height: 36px;
    margin-bottom: 26px;
}

.conn {
    display: block;
    flex: none;
    width: 25px;
    height: 1px;
    background: #5f6368;
}

.num {
    width: 16px;
    margin-right: 2px;
    padding-left: 3px;
    font-size: 20px;
    font-weight: 300;
    color: #444;
}

.box {
    position: relative;
    flex: none;
    height: 36px;
    border: 1px solid #80868b;
    border-radius: 4px;
}

.box label {
    position: absolute;
    top: -7px;
    left: 5px;
    padding: 0 4px;
    max-width: calc(100% - 10px);
    overflow: hidden;
    background: #fff;
    font-size: 12px;
    line-height: 13px;
    font-weight: 500;
    color: #444;
    white-space: nowrap;
}

/* the label is cut short in the real form too */
.f-len label {
    padding-right: 0;
    max-width: 64px;
}

.box-text {
    padding-left: 9px;
    line-height: 34px;
    font-size: 13px;
    color: #202124;
    white-space: nowrap;
}

.box-text.area {
    padding-top: 3px;
}

.muted {
    color: #80868b;
}

.f-name { width: 256px; }
.f-type { width: 199px; margin-left: 16px; }
.f-mode { width: 200px; margin-left: 17px; }
.f-len { width: 80px; margin-left: 15px; }
.f-desc { width: 200px; margin-left: 16px; }
.f-mode + .f-desc { margin-left: 15px; }

.select-caret {
    position: absolute;
    top: 14px;
    right: 14px;
    border-left-width: 5px;
    border-right-width: 5px;
    border-top-width: 5px;
}

.grip {
    position: absolute;
    right: 1px;
    bottom: 1px;
    width: 10px;
    height: 10px;
    background: linear-gradient(135deg, transparent 45%, #555 45%, #555 53%, transparent 53%, transparent 72%, #555 72%, #555 80%, transparent 80%);
}

.focused {
    border: 3px solid #3367d6;
}

.focused label {
    top: -9px;
    left: 3px;
    color: #3367d6;
}

.focused .box-text {
    padding-left: 7px;
    line-height: 30px;
}

.text-cursor {
    display: inline-block;
    width: 1px;
    height: 15px;
    margin-left: 7px;
    vertical-align: -3px;
    background: #3367d6;
}

.trash {
    width: 13px;
    height: 15px;
    margin-left: 14px;
    fill: #444;
}

.add-row {
    height: 24px;
    margin: -7px 0 0;
}

.add-icon {
    position: relative;
    width: 14px;
    height: 14px;
    margin-left: 9px;
    background: #444;
    border-radius: 1px;
    flex: none;
}

.add-icon::before, .add-icon::after {
    content: "";
    position: absolute;
    background: #fff;
}

.add-icon::before { left: 3px; top: 6px; width: 8px; height: 2px; }
.add-icon::after { left: 6px; top: 3px; width: 2px; height: 8px; }

.add-text {
    margin-left: 6px;
    font-size: 13px;
    color: #444;
}
```
